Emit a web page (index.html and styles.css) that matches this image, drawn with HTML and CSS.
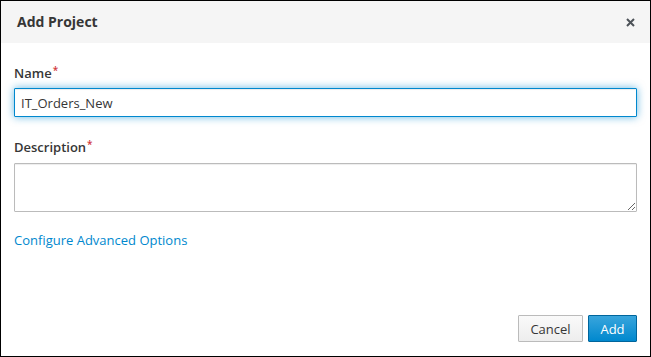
FILE: index.html
```html
<!DOCTYPE html>
<html lang="en">
<head>
  <meta charset="UTF-8">
  <meta name="viewport" content="width=device-width, initial-scale=1.0">
  <title>Add Project</title>
  <link rel="stylesheet" href="styles.css">
</head>
<body>
  <div class="modal">
    <div class="modal-header">
      <h4 class="modal-title">Add Project</h4>
      <button class="close" aria-label="Close">
        <svg width="9" height="9" viewBox="0 0 9 9">
          <path d="M1 1 L8 8 M8 1 L1 8" stroke="#4d5258" stroke-width="2" fill="none"/>
        </svg>
      </button>
    </div>

    <div class="modal-body">
      <label class="field-label" for="project-name">Name<span class="required">*</span></label>
      <input type="text" id="project-name" class="form-control focused" value="IT_Orders_New">

      <label class="field-label desc-label" for="project-desc">Description<span class="required">*</span></label>
      <textarea id="project-desc" class="form-control area"></textarea>

      <a href="#" class="advanced-link">Configure Advanced Options</a>
    </div>

    <div class="modal-footer">
      <button class="btn btn-default">Cancel</button>
      <button class="btn btn-primary">Add</button>
    </div>
  </div>
</body>
</html>
```

FILE: styles.css
```css
/* base */
:root {
  --text-color: #363636;
  --blue: #0088ce;
  --blue-dark: #00659c;
  --border-color: #bbb;
}

html, body {
  margin: 0;
  padding: 0;
}

body {
  font-family: 'Open Sans', 'Liberation Sans', Arial, sans-serif;
  font-size: 13px;
  color: var(--text-color);
  background: #fff;
}

.modal {
  width: 651px;
  height: 357px;
  box-sizing: border-box;
  border: 1px solid #000;
  display: flex;
  flex-direction: column;
}

/* header */
.modal-header {
  height: 42px;
  background-color: #f5f5f5;
  display: flex;
  align-items: center;
  justify-content: space-between;
  padding: 0 15px 0 16px;
}

.modal-title {
  margin: 0;
  font-size: 14px;
  font-weight: 700;
  line-height: 20px;
  color: var(--text-color);
}

.close {
  border: none;
  background: none;
  padding: 0;
  width: 9px;
  height: 9px;
  display: flex;
  cursor: pointer;
}

/* body */
.modal-body {
  flex: 1;
  display: flex;
  flex-direction: column;
  align-items: flex-start;
  padding: 21px 13px 0;
}

.field-label {
  font-weight: 600;
  line-height: 18px;
  margin-bottom: 6px;
}

.desc-label {
  margin-top: 21px;
  margin-bottom: 7px;
}

.required {
  color: #d1373c;
  font-size: 10px;
  vertical-align: top;
  position: relative;
  top: -3px;
  margin-left: 1px;
}

.form-control {
  width: 100%;
  box-sizing: border-box;
  border: 1px solid var(--border-color);
  border-radius: 1px;
  font-family: inherit;
  font-size: 13px;
  color: var(--text-color);
  padding: 2px 6px;
  margin: 0;
  outline: none;
  box-shadow: inset 0 1px 1px rgba(3, 3, 3, 0.075);
}

input.form-control {
  height: 29px;
}

.form-control.focused {
  border-color: var(--blue);
  box-shadow: inset 0 1px 1px rgba(3, 3, 3, 0.075), 0 0 8px rgba(0, 136, 206, 0.6);
}

.area {
  height: 49px;
  resize: vertical;
}

.advanced-link {
  margin-top: 19px;
  line-height: 18px;
  color: var(--blue);
  text-decoration: none;
}

/* footer */
.modal-footer {
  display: flex;
  justify-content: flex-end;
  gap: 5px;
  padding: 0 13px 14px;
}

.btn {
  height: 27px;
  font-family: inherit;
  font-size: 13px;
  border-radius: 1px;
  padding: 0;
  cursor: pointer;
}

.btn-default {
  width: 65px;
  color: var(--text-color);
  border: 1px solid var(--border-color);
  background: linear-gradient(#fafafa, #ededed);
}

.btn-primary {
  width: 49px;
  color: #fff;
  border: 1px solid var(--blue-dark);
  background: linear-gradient(#39a5dc, var(--blue));
}
```
